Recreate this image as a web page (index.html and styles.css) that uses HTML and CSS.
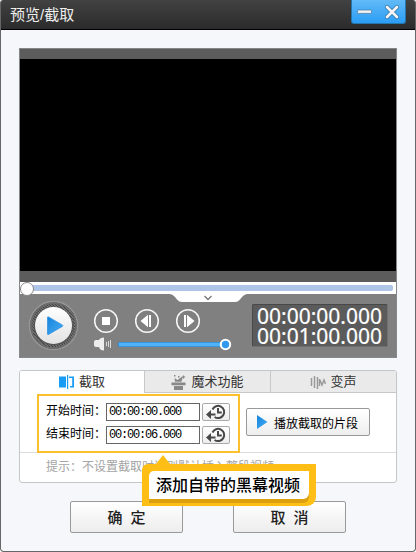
FILE: index.html
```html
<!DOCTYPE html>
<html lang="zh-CN">
<head>
<meta charset="utf-8">
<title>预览/截取</title>
<link rel="stylesheet" href="styles.css">
</head>
<body>
<div class="window">
  <header class="titlebar">
    <h1>预览/截取</h1>
    <div class="winbtns">
      <svg width="55" height="24" viewBox="0 0 55 24">
        <rect x="6.500" y="10" width="14" height="3.400" rx="1" fill="#f2f2f2" stroke="#3c76a4" stroke-width=".7"/>
        <path d="M36 7l10 10M46 7L36 17" stroke="#2f75a8" stroke-width="4.200" stroke-linecap="round"/>
        <path d="M36 7l10 10M46 7L36 17" stroke="#f4f4f4" stroke-width="2.700" stroke-linecap="round"/>
      </svg>
    </div>
  </header>
  <main>
    <section class="player">
      <div class="screen"></div>
      <div class="seek"><div class="track"></div></div>
      <div class="controls">
        <svg class="buttons" width="227" height="63" viewBox="20 294 227 63">
          <defs>
            <pattern id="mesh" width="3" height="3" patternUnits="userSpaceOnUse"><rect width="3" height="3" fill="#777"/><path d="M0 0l3 3" stroke="#444" stroke-width="1.200"/></pattern>
            <linearGradient id="blue" x2="1" y2="1"><stop offset="0" stop-color="#1583dc"/><stop offset="1" stop-color="#49adf3"/></linearGradient>
            <linearGradient id="disc" x2="0" y2="1"><stop offset="0" stop-color="#fff"/><stop offset="1" stop-color="#e2e2e2"/></linearGradient>
          </defs>
          <path d="M170 294q3 .5 5 3l2 2.500q2 2.500 5 2.500h53q3 0 5-2.500l2-2.500q2-2.500 5-3z" fill="#fff"/>
          <path d="M204.500 296l3.500 3.500 3.500-3.500" fill="none" stroke="#777" stroke-width="1.300"/>
          <circle cx="53.500" cy="325.500" r="24" fill="url(#mesh)" stroke="#969696" stroke-width="1.500"/>
          <circle cx="53.500" cy="325.500" r="22.500" fill="none" stroke="#6b6b6b" stroke-width="1.500"/>
          <circle cx="53.500" cy="326" r="19.300" fill="#555"/>
          <circle cx="53.500" cy="325.500" r="18.500" fill="url(#disc)"/>
          <path d="M47.500 317.500q0-1 1-.6l13.800 8q1.200.8 0 1.600l-13.800 8q-1 .5-1-.6z" fill="url(#blue)" stroke="#1785df" stroke-width=".6"/>
          <g fill="none" stroke="#f7f7f7" stroke-width="1.500"><circle cx="106" cy="321" r="11.300"/><circle cx="147" cy="321" r="11.300"/><circle cx="188" cy="321" r="11.300"/></g>
          <path fill="#fff" d="M102 317h8v8h-8zM140.500 321l7.500-6.200v12.400zM149 315h2v12h-2zM184 315h2v12h-2zM187 314.800l7.500 6.200-7.500 6.200z"/>
          <path d="M94 342q0-2 2-2h3q1-2.500 5-2.500v13q-4 0-5-3.500h-3q-2 0-2-2z" fill="#ededed"/>
          <path d="M106.500 342v4M108.500 341v6M110.500 340v8" stroke="#d9d9d9"/>
          <rect x="118" y="342" width="108" height="5" rx="1.500" fill="#318ad0"/><path d="M119 344.500h105" stroke="#50b3fc" stroke-width="3.500"/>
          <circle cx="225.500" cy="344.500" r="4.700" fill="#3298ee" stroke="#fff" stroke-width="2"/>
        </svg>
        <div class="clock">00:00:00.000<br>00:01:00.000</div>
      </div>
    </section>
    <section class="panel">
      <nav class="tabs">
        <div class="tab active">
          <svg width="16" height="16" viewBox="0 0 16 16"><path fill="#189cf4" d="M0 2.500h7v11H0zM8 1h1.200v14H8zM10 2.500h5v11h-4V12h2.200V4H10z"/></svg>
          <span>截取</span>
        </div>
        <div class="tab magic">
          <svg width="16" height="16" viewBox="0 0 16 16"><path fill="#888" d="M.5 8.500h14v2.800H.5zM3 12h9v4H3zM4 7.700L3.500 4l3 2 4-3 1 1-1 3.700zM12.500 1l.7 1.300 1.300.7-1.300.7-.7 1.300-.7-1.300-1.300-.7 1.300-.7zM3 1h1.500v1.500H3zM7 2h1.500v1.500H7z"/></svg>
          <span>魔术功能</span>
        </div>
        <div class="tab">
          <svg width="16" height="16" viewBox="0 0 16 16"><path d="M1.500 4v8M4.500 2v12M7.500 3v12" fill="none" stroke="#999" stroke-width="1.500"/><path d="M9.500 5v7M10 6l2 5 2-5 1.500 4" fill="none" stroke="#999" stroke-width="1.400"/></svg>
          <span>变声</span>
        </div>
      </nav>
      <div class="settings">
        <div class="range">
          <div class="line"><label>开始时间：</label><div class="field">00:00:00.000</div>
            <div class="pick"><svg width="22" height="16" viewBox="0 0 22 16"><path d="M7.500 5.500A6.100 6.100 0 1 1 9.600 13" fill="none" stroke="#484848" stroke-width="2"/><path d="M13 4v4.500h3.800M5 10.500h5.500" fill="none" stroke="#484848" stroke-width="2"/><path d="M1 10.500l5-4.500v9z" fill="#484848"/></svg></div></div>
          <div class="line"><label>结束时间：</label><div class="field">00:00:06.000</div>
            <div class="pick"><svg width="22" height="16" viewBox="0 0 22 16"><path d="M7.500 5.500A6.100 6.100 0 1 1 9.600 13" fill="none" stroke="#484848" stroke-width="2"/><path d="M13 4v4.500h3.800M5 10.500h5.500" fill="none" stroke="#484848" stroke-width="2"/><path d="M1 10.500l5-4.500v9z" fill="#484848"/></svg></div></div>
        </div>
        <div class="clip"><svg width="11" height="14" viewBox="0 0 11 14"><path d="M0 0l10.500 7L0 14z" fill="url(#blue)"/></svg><span>播放截取的片段</span></div>
      </div>
      <p class="hint">提示：不设置截取时间则默认插入整段视频</p>
    </section>
    <footer class="actions"><div class="action">确 定</div><div class="action">取 消</div></footer>
  </main>
  <aside class="callout"><div>添加自带的黑幕视频</div></aside>
</div>
</body>
</html>
```
FILE: styles.css
```css
* { box-sizing: border-box; }
body { margin: 0; background: #fff; font-family: "Liberation Sans", "Noto Sans CJK SC", sans-serif; }
svg { display: block; flex: none; }
.window { position: relative; width: 416px; height: 552px; border: 1px solid #666; border-top: 0; border-radius: 3px 3px 4px 4px; background: #f5f7fa; overflow: hidden; }
.titlebar { display: flex; justify-content: space-between; height: 30px; margin: 0 -1px; padding: 0 10px 0 10px; background: linear-gradient(#424242, #2b2b2b); border-bottom: 1px solid #000; }
h1 { margin: 0; color: #eee; font: 15px/30px "Liberation Sans", "Noto Sans CJK SC", sans-serif; }
.winbtns { width: 55px; height: 24px; border: 1px solid #2577ad; border-top: 0; border-radius: 0 0 3px 3px; background: linear-gradient(#62baf7, #2b9df5); }
.winbtns svg { margin-left: -1px; }
main { padding: 18px 18px 0; }
.player { width: 378px; height: 310px; border: 1px solid #858889; background: #808080; }
.screen { height: 233px; border: solid #5c5c5c; border-width: 10px 0; border-bottom-width: 11px; background: #000; }
.seek { position: relative; height: 12px; padding: 3px; background: #fff; }
.track { height: 6px; border-radius: 2px; background: #aec5e7; }
.seek::before { content: ""; position: absolute; left: 0; top: 0; width: 12px; height: 12px; border: 1px solid #888; border-radius: 50%; background: #fff; }
.controls { display: flex; justify-content: space-between; height: 63px; padding-right: 8px; }
.clock { width: 136px; height: 43px; margin-top: 10px; padding: 1px 0 0 4px; border: 1px solid #484848; border-right-color: #707070; border-bottom-color: #707070; border-radius: 2px; background: #5b5b5b; color: #fff; font: 21px/20px "Noto Sans", sans-serif; -webkit-text-stroke: .2px #fff; white-space: nowrap; }
.panel { height: 113px; width: 378px; margin-top: 12px; border: 1px solid #c5c6c7; border-radius: 3px; background: #fff; overflow: hidden; }
.tabs { display: grid; grid-template-columns: 124px 126px 126px; height: 22px; }
.tab { display: flex; align-items: center; justify-content: center; gap: 4px; border-left: 1px solid #c8c8c8; border-bottom: 1px solid #c8c8c8; background: #eaeaea; color: #333; font-size: 13px; line-height: 20px; }
.tab.active { border: 0; background: #fff; }
.settings { display: flex; height: 60px; padding-left: 17px; border-bottom: 1px solid #dcdcdc; }
.range { width: 203px; height: 59px; margin-top: 1px; padding: 7px 0 0 7px; border: 2px solid #fbc02c; }
.line { display: flex; height: 18px; margin-bottom: 5px; }
.line label { width: 60px; font-size: 12px; line-height: 17px; white-space: nowrap; }
.field { width: 94px; height: 18px; padding-left: 2px; border: 1px solid #666; background: #fff; font: 12px/16px "Liberation Mono", monospace; letter-spacing: -1.2px; }
.pick { width: 28px; height: 18px; margin-left: 2px; padding-left: 2px; border: 1px solid #aaa; border-radius: 2px; background: linear-gradient(#fff, #eee); }
.clip { display: flex; align-items: center; width: 124px; height: 28px; margin: 15px 0 0 6px; padding-left: 10px; gap: 6px; border: 1px solid #999; border-radius: 2px; background: linear-gradient(#fff, #eee); font-size: 12px; white-space: nowrap; }
.hint { margin: 0; padding-left: 26px; color: #a4a4a4; font-size: 12px; line-height: 29px; white-space: nowrap; }
.actions { display: flex; gap: 50px; padding: 18px 0 0 51px; }
.action { width: 113px; height: 32px; border: 1px solid #999; border-radius: 2px; background: linear-gradient(#fff, #ededed); color: #222; text-align: center; font-size: 15px; font-weight: 500; line-height: 32px; word-spacing: 4px; }
.callout { position: absolute; left: 141px; top: 464px; width: 174px; height: 42px; padding: 7px; border-radius: 6px 0 9px 0; background: #ffbe16; }
.callout::before { content: ""; position: absolute; left: 14px; top: -9px; border: 7px solid transparent; border-top: 0; border-bottom: 9px solid #ffbe16; }
.callout div { width: 160px; height: 28px; padding-left: 7px; border-radius: 5px 0 6px 0; background: #fff; box-shadow: 0 4px #dca00f; font-size: 16px; font-weight: 500; line-height: 30px; white-space: nowrap; }
```
